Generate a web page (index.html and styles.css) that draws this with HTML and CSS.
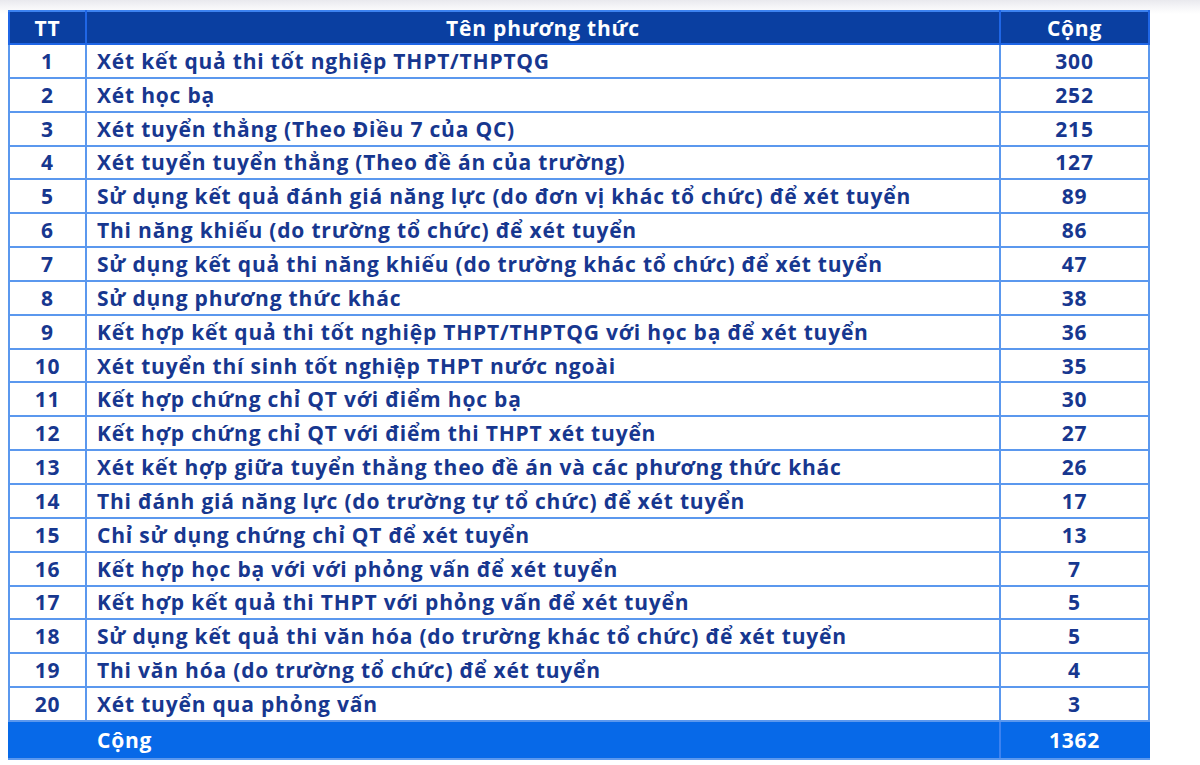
FILE: index.html
```html
<!DOCTYPE html>
<html lang="vi">
<head>
<meta charset="utf-8">
<link rel="stylesheet" href="styles.css">
</head>
<body>
<div class="page">
<table class="tbl">
<colgroup><col class="c-tt"><col class="c-name"><col class="c-num"></colgroup>
<thead>
<tr><th>TT</th><th>Tên phương thức</th><th>Cộng</th></tr>
</thead>
<tbody>
<tr><td class="tt">1</td><td class="name">Xét kết quả thi tốt nghiệp THPT/THPTQG</td><td class="num">300</td></tr>
<tr><td class="tt">2</td><td class="name">Xét học bạ</td><td class="num">252</td></tr>
<tr><td class="tt">3</td><td class="name">Xét tuyển thẳng (Theo Điều 7 của QC)</td><td class="num">215</td></tr>
<tr><td class="tt">4</td><td class="name">Xét tuyển tuyển thẳng (Theo đề án của trường)</td><td class="num">127</td></tr>
<tr><td class="tt">5</td><td class="name">Sử dụng kết quả đánh giá năng lực (do đơn vị khác tổ chức) để xét tuyển</td><td class="num">89</td></tr>
<tr><td class="tt">6</td><td class="name">Thi năng khiếu (do trường tổ chức) để xét tuyển</td><td class="num">86</td></tr>
<tr><td class="tt">7</td><td class="name">Sử dụng kết quả thi năng khiếu (do trường khác tổ chức) để xét tuyển</td><td class="num">47</td></tr>
<tr><td class="tt">8</td><td class="name">Sử dụng phương thức khác</td><td class="num">38</td></tr>
<tr><td class="tt">9</td><td class="name">Kết hợp kết quả thi tốt nghiệp THPT/THPTQG với học bạ để xét tuyển</td><td class="num">36</td></tr>
<tr><td class="tt">10</td><td class="name">Xét tuyển thí sinh tốt nghiệp THPT nước ngoài</td><td class="num">35</td></tr>
<tr><td class="tt">11</td><td class="name">Kết hợp chứng chỉ QT với điểm học bạ</td><td class="num">30</td></tr>
<tr><td class="tt">12</td><td class="name">Kết hợp chứng chỉ QT với điểm thi THPT xét tuyển</td><td class="num">27</td></tr>
<tr><td class="tt">13</td><td class="name">Xét kết hợp giữa tuyển thẳng theo đề án và các phương thức khác</td><td class="num">26</td></tr>
<tr><td class="tt">14</td><td class="name">Thi đánh giá năng lực (do trường tự tổ chức) để xét tuyển</td><td class="num">17</td></tr>
<tr><td class="tt">15</td><td class="name">Chỉ sử dụng chứng chỉ QT để xét tuyển</td><td class="num">13</td></tr>
<tr><td class="tt">16</td><td class="name">Kết hợp học bạ với với phỏng vấn để xét tuyển</td><td class="num">7</td></tr>
<tr><td class="tt">17</td><td class="name">Kết hợp kết quả thi THPT với phỏng vấn để xét tuyển</td><td class="num">5</td></tr>
<tr><td class="tt">18</td><td class="name">Sử dụng kết quả thi văn hóa (do trường khác tổ chức) để xét tuyển</td><td class="num">5</td></tr>
<tr><td class="tt">19</td><td class="name">Thi văn hóa (do trường tổ chức) để xét tuyển</td><td class="num">4</td></tr>
<tr><td class="tt">20</td><td class="name">Xét tuyển qua phỏng vấn</td><td class="num">3</td></tr>
</tbody>
<tfoot>
<tr><td class="tt"></td><td class="name">Cộng</td><td class="num">1362</td></tr>
</tfoot>
</table>
</div>
</body>
</html>
```
FILE: styles.css
```css
html, body {
  margin: 0;
  padding: 0;
  background: #ffffff;
}
body {
  width: 1200px;
  height: 765px;
  overflow: hidden;
  background: linear-gradient(to bottom, #e9e9ee 0px, #f7f7f9 8px, #ffffff 14px);
  font-family: "Open Sans", "DejaVu Sans", sans-serif;
}
.page {
  padding: 10px 0 0 8px;
}
.tbl {
  width: 1140px;
  border-collapse: collapse;
  table-layout: fixed;
  color: #17378f;
  font-weight: 700;
  font-size: 21px;
  letter-spacing: 0.8px;
}
.c-tt { width: 77px; }
.c-name { width: 914px; }
.c-num { width: 149px; }
.tbl th, .tbl td {
  border: 2px solid #5b98ee;
  padding: 0;
  line-height: 30px;
  white-space: nowrap;
}
.tbl thead th {
  background: #0a3fa1;
  color: #ffffff;
  height: 31px;
  text-align: center;
  border-color: #1f66e6;
  border-top-color: #3c82f0;
}
.tbl tbody td {
  height: 31.85px;
  background: #ffffff;
}
.tt { text-align: center; }
.num { text-align: center; }
.name { text-align: left; padding-left: 10px !important; }
.tbl tfoot td {
  background: #0769e8;
  color: #ffffff;
  height: 36px;
  border-color: #0769e8;
  border-bottom-color: #5b98ee;
}
.tbl tfoot td.name { border-right-color: #3c82f0; }
```
